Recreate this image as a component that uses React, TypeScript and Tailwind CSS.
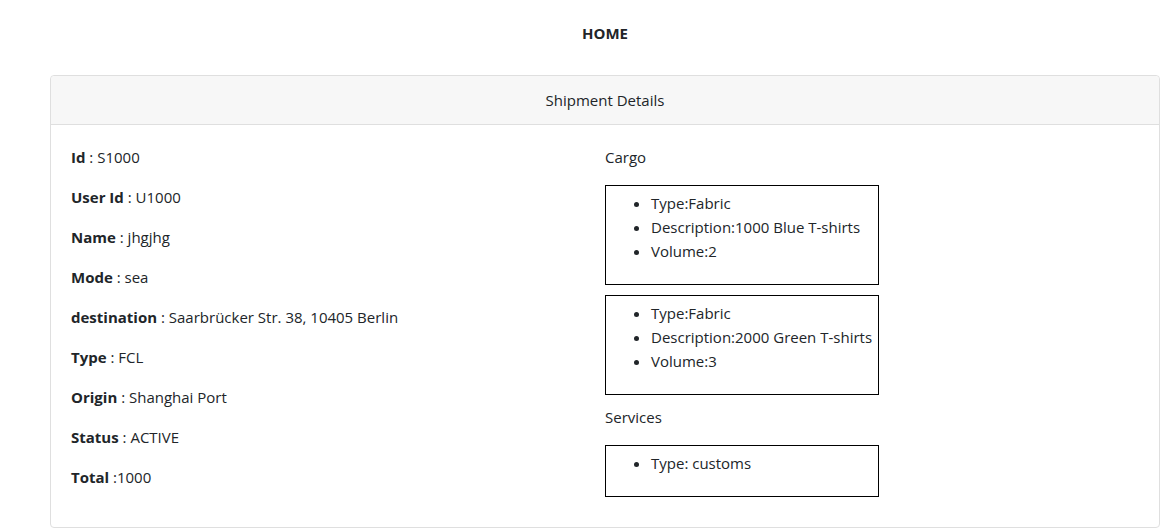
import React from "react";

const fields: [string, string, string][] = [
  ["Id", " : ", "S1000"],
  ["User Id", " : ", "U1000"],
  ["Name", " : ", "jhgjhg"],
  ["Mode", " : ", "sea"],
  ["destination", " : ", "Saarbrücker Str. 38, 10405 Berlin"],
  ["Type", " : ", "FCL"],
  ["Origin", " : ", "Shanghai Port"],
  ["Status", " : ", "ACTIVE"],
  ["Total", " :", "1000"],
];

const cargo = [
  ["Type:Fabric", "Description:1000 Blue T-shirts", "Volume:2"],
  ["Type:Fabric", "Description:2000 Green T-shirts", "Volume:3"],
];

function Box({ items }: { items: string[] }) {
  return (
    <div className="w-[274px] border border-black p-[5px] mb-[10px]">
      <ul className="list-disc pl-10 mb-4">
        {items.map((t, i) => (
          <li key={i} className="leading-6 whitespace-nowrap">
            {t}
          </li>
        ))}
      </ul>
    </div>
  );
}

export default function App() {
  return (
    <div className="w-full overflow-hidden bg-white">
      <div
        className="w-[1210px] text-[15px] leading-6 text-[#212529]"
        style={{ fontFamily: '"Open Sans", "Noto Sans", sans-serif' }}
      >
        <div className="h-[75px] flex items-start justify-center pt-[21px]">
          <span className="font-bold">HOME</span>
        </div>
        <div className="mx-[50px] border border-[#dfdfdf] rounded-[4px]">
          <div className="h-[49px] bg-[#f7f7f7] border-b border-[#dfdfdf] flex items-center justify-center rounded-t-[4px]">
            Shipment Details
          </div>
          <div className="flex p-5">
            <div className="w-[534px]">
              {fields.map(([k, sep, v]) => (
                <p key={k} className="mb-4">
                  <b className="font-bold">{k}</b>
                  {sep}
                  {v}
                </p>
              ))}
            </div>
            <div className="w-[534px]">
              <p className="mb-4">Cargo</p>
              {cargo.map((c, i) => (
                <Box key={i} items={c} />
              ))}
              <p className="mb-4">Services</p>
              <Box items={["Type: customs"]} />
            </div>
          </div>
        </div>
      </div>
    </div>
  );
}
